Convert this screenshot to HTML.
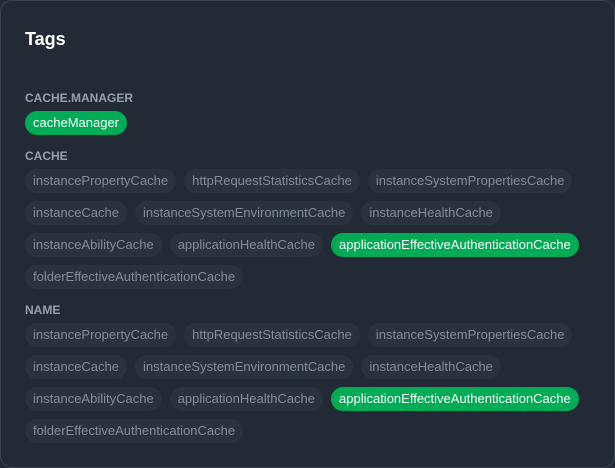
<!DOCTYPE html>
<html><head><meta charset="utf-8"><style>
html,body{margin:0;padding:0;background:#222a35;}
body{width:615px;height:468px;overflow:hidden;font-family:"Liberation Sans",Arial,sans-serif;}
.panel{position:absolute;left:0;top:0;width:613px;height:466px;border:1px solid #3a434f;border-radius:12px;background:#222a35;}
h1{position:absolute;left:25px;top:29px;margin:0;font-size:18px;font-weight:bold;color:#fff;line-height:20px;}
.sec{position:absolute;left:25px;width:565px;}
.lbl{font-size:12px;font-weight:bold;color:#97a0aa;line-height:14px;height:14px;margin-bottom:6px;}
.tags{display:flex;flex-wrap:wrap;gap:8px;}
.t{height:24px;line-height:24px;padding:0 8px;border-radius:12px;background:#2a323d;color:#848d97;font-size:13px;white-space:nowrap;}
.g{background:#00ab55;color:#fff;}
</style></head><body>
<div class="panel"></div>
<h1>Tags</h1>
<div class="sec" style="top:91px"><div class="lbl">CACHE.MANAGER</div><div class="tags"><span class="t g">cacheManager</span></div></div>
<div class="sec" style="top:149px"><div class="lbl">CACHE</div><div class="tags">
<span class="t">instancePropertyCache</span><span class="t">httpRequestStatisticsCache</span><span class="t">instanceSystemPropertiesCache</span>
<span class="t">instanceCache</span><span class="t">instanceSystemEnvironmentCache</span><span class="t">instanceHealthCache</span>
<span class="t">instanceAbilityCache</span><span class="t">applicationHealthCache</span><span class="t g">applicationEffectiveAuthenticationCache</span>
<span class="t">folderEffectiveAuthenticationCache</span></div></div>
<div class="sec" style="top:303px"><div class="lbl">NAME</div><div class="tags">
<span class="t">instancePropertyCache</span><span class="t">httpRequestStatisticsCache</span><span class="t">instanceSystemPropertiesCache</span>
<span class="t">instanceCache</span><span class="t">instanceSystemEnvironmentCache</span><span class="t">instanceHealthCache</span>
<span class="t">instanceAbilityCache</span><span class="t">applicationHealthCache</span><span class="t g">applicationEffectiveAuthenticationCache</span>
<span class="t">folderEffectiveAuthenticationCache</span></div></div>
</body></html>
